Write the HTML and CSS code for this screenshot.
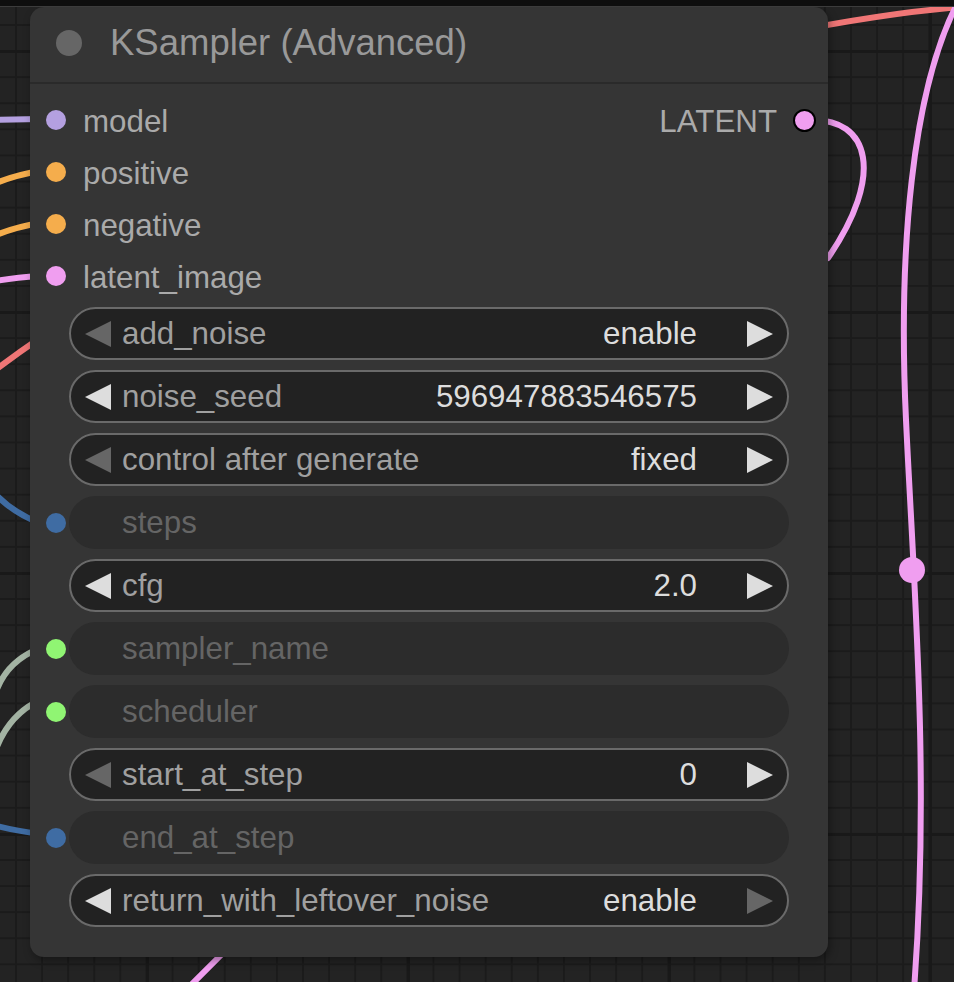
FILE: index.html
```html
<!DOCTYPE html>
<html lang="en">
<head>
  <meta charset="UTF-8" />
  <meta name="viewport" content="width=device-width, initial-scale=1.0"/>
  <title>KSampler (Advanced)</title>
  <link rel="stylesheet" href="styles.css">
</head>
<body>
<div class="canvas">
  <div class="topbar"></div>

  <!-- wires on the graph canvas -->
  <svg class="wires" width="954" height="982" viewBox="0 0 954 982">
    <g fill="none" stroke-width="6" stroke-linecap="round">
      <path d="M -10 120 L 40 119" stroke="#b4a0e0"/>
      <path d="M -10 186 Q 10 176 40 171" stroke="#f5ad4c"/>
      <path d="M -10 238 Q 10 228 40 223" stroke="#f5ad4c"/>
      <path d="M -10 282 Q 10 278 40 276" stroke="#f09ef0"/>
      <path d="M -10 374 Q 15 355 40 338" stroke="#f07676"/>
      <path d="M -10 488 Q 10 512 40 523" stroke="#3f6ca3"/>
      <path d="M -5 695 Q 5 662 40 648" stroke="#a3b3a3"/>
      <path d="M -5 752 Q 8 715 40 700" stroke="#a3b3a3"/>
      <path d="M -10 824 Q 10 830 40 834" stroke="#3f6ca3"/>
      <path d="M 186 990 L 226 950" stroke="#f09ef0"/>
      <path d="M 780 34 C 850 20, 900 12, 960 7" stroke="#f07676"/>
      <path d="M 810 120 C 870 118, 885 175, 828 258" stroke="#f09ef0"/>
      <path d="M 958 2 C 912 90, 898 250, 906 420 S 930 780, 914 990" stroke="#f09ef0"/>
    </g>
    <circle cx="912" cy="570" r="13" fill="#f09ef0"/>
  </svg>

  <div class="node">
    <div class="node-title">
      <span class="title-dot"></span>
      <span class="title-text">KSampler (Advanced)</span>
    </div>

    <div class="slots">
      <div class="slot-row">
        <span class="dot c-model"></span>
        <span class="slot-label">model</span>
        <span class="output">
          <span class="slot-label">LATENT</span>
          <span class="out-dot"></span>
        </span>
      </div>
      <div class="slot-row">
        <span class="dot c-cond"></span>
        <span class="slot-label">positive</span>
      </div>
      <div class="slot-row">
        <span class="dot c-cond"></span>
        <span class="slot-label">negative</span>
      </div>
      <div class="slot-row">
        <span class="dot c-latent"></span>
        <span class="slot-label">latent_image</span>
      </div>
    </div>

    <div class="widgets">
      <div class="widget-row">
        <span class="wslot"></span>
        <div class="pill">
          <svg class="arrow dim" viewBox="0 0 26 26"><polygon points="26,0 26,26 0,13"/></svg>
          <span class="wlabel">add_noise</span>
          <span class="wvalue">enable</span>
          <svg class="arrow" viewBox="0 0 26 26"><polygon points="0,0 0,26 26,13"/></svg>
        </div>
      </div>
      <div class="widget-row">
        <span class="wslot"></span>
        <div class="pill">
          <svg class="arrow" viewBox="0 0 26 26"><polygon points="26,0 26,26 0,13"/></svg>
          <span class="wlabel">noise_seed</span>
          <span class="wvalue">596947883546575</span>
          <svg class="arrow" viewBox="0 0 26 26"><polygon points="0,0 0,26 26,13"/></svg>
        </div>
      </div>
      <div class="widget-row">
        <span class="wslot"></span>
        <div class="pill">
          <svg class="arrow dim" viewBox="0 0 26 26"><polygon points="26,0 26,26 0,13"/></svg>
          <span class="wlabel">control after generate</span>
          <span class="wvalue">fixed</span>
          <svg class="arrow" viewBox="0 0 26 26"><polygon points="0,0 0,26 26,13"/></svg>
        </div>
      </div>
      <div class="widget-row">
        <span class="wslot c-int"></span>
        <div class="pill off"><span class="wlabel">steps</span></div>
      </div>
      <div class="widget-row">
        <span class="wslot"></span>
        <div class="pill">
          <svg class="arrow" viewBox="0 0 26 26"><polygon points="26,0 26,26 0,13"/></svg>
          <span class="wlabel">cfg</span>
          <span class="wvalue">2.0</span>
          <svg class="arrow" viewBox="0 0 26 26"><polygon points="0,0 0,26 26,13"/></svg>
        </div>
      </div>
      <div class="widget-row">
        <span class="wslot c-combo"></span>
        <div class="pill off"><span class="wlabel">sampler_name</span></div>
      </div>
      <div class="widget-row">
        <span class="wslot c-combo"></span>
        <div class="pill off"><span class="wlabel">scheduler</span></div>
      </div>
      <div class="widget-row">
        <span class="wslot"></span>
        <div class="pill">
          <svg class="arrow dim" viewBox="0 0 26 26"><polygon points="26,0 26,26 0,13"/></svg>
          <span class="wlabel">start_at_step</span>
          <span class="wvalue">0</span>
          <svg class="arrow" viewBox="0 0 26 26"><polygon points="0,0 0,26 26,13"/></svg>
        </div>
      </div>
      <div class="widget-row">
        <span class="wslot c-int"></span>
        <div class="pill off"><span class="wlabel">end_at_step</span></div>
      </div>
      <div class="widget-row">
        <span class="wslot"></span>
        <div class="pill">
          <svg class="arrow" viewBox="0 0 26 26"><polygon points="26,0 26,26 0,13"/></svg>
          <span class="wlabel">return_with_leftover_noise</span>
          <span class="wvalue">enable</span>
          <svg class="arrow dim" viewBox="0 0 26 26"><polygon points="0,0 0,26 26,13"/></svg>
        </div>
      </div>
    </div>
  </div>
</div>
</body>
</html>
```

FILE: styles.css
```css
body {
  margin: 0;
  background: #222;
  font-family: "Liberation Sans", Arial, sans-serif;
  overflow: hidden;
}
/* graph canvas with grid */
.canvas {
  position: relative;
  width: 954px;
  height: 982px;
  overflow: hidden;
  background-color: #232323;
  background-image:
    linear-gradient(90deg, #191919 3px, transparent 3px),
    linear-gradient(#191919 3px, transparent 3px),
    linear-gradient(90deg, #1b1b1b 2px, transparent 2px),
    linear-gradient(#1b1b1b 2px, transparent 2px);
  background-size: 261px 261px, 261px 261px, 26.1px 26.1px, 26.1px 26.1px;
  background-position: 146px 0, 0 311px, 15px 0, 0 24px;
}
.topbar {
  position: relative;
  z-index: 2;
  height: 6px;
  background: #0e0e0e;
  border-bottom: 1px solid #3c3c3c;
}
.wires {
  position: absolute;
  top: 0;
  left: 0;
}
/* node window */
.node {
  position: absolute;
  top: 7px;
  left: 30px;
  width: 798px;
  height: 950px;
  background: #353535;
  border-radius: 14px;
  box-shadow: 2px 4px 8px rgba(0,0,0,0.35);
}
.node-title {
  display: flex;
  align-items: center;
  height: 71px;
  padding: 0 0 4px 26px;
  border-bottom: 2px solid #2a2a2a;
}
.title-dot {
  width: 26px;
  height: 26px;
  border-radius: 50%;
  background: #666;
}
.title-text {
  margin-left: 28px;
  font-size: 36.5px;
  color: #999;
}
/* inputs / outputs */
.slots {
  padding-top: 12px;
}
.slot-row {
  display: flex;
  align-items: center;
  height: 52px;
  padding: 0 12px 0 16px;
}
.dot {
  width: 20px;
  height: 20px;
  margin-bottom: 4px;
  border-radius: 50%;
}
.slot-label {
  margin-left: 17px;
  font-size: 31.3px;
  color: #aaa;
}
.output {
  display: flex;
  align-items: center;
  margin-left: auto;
}
.output .slot-label {
  margin-left: 0;
}
.out-dot {
  box-sizing: border-box;
  width: 23px;
  height: 23px;
  margin: 0 0 4px 16px;
  border-radius: 50%;
  border: 2px solid #000;
  background: #f09ef0;
}
.c-model { background: #b4a0e0; }
.c-cond { background: #f5ad4c; }
.c-latent { background: #f09ef0; }
.c-int { background: #3f6ca3; }
.c-combo { background: #90f573; }
/* widgets */
.widgets {
  display: flex;
  flex-direction: column;
  gap: 10px;
  margin-top: 3px;
  padding: 0 39px 0 16px;
}
.widget-row {
  display: flex;
  align-items: center;
}
.wslot {
  width: 20px;
  height: 20px;
  margin-right: 3px;
  border-radius: 50%;
}
.pill {
  box-sizing: border-box;
  flex: 1;
  display: flex;
  align-items: center;
  height: 53px;
  padding: 0 14px;
  background: #222;
  border: 2px solid #6a6a6a;
  border-radius: 27px;
  font-size: 31.3px;
  line-height: 49px;
  white-space: nowrap;
}
.pill.off {
  background: #2c2c2c;
  border-color: transparent;
  padding-left: 51px;
}
.pill.off .wlabel {
  margin-left: 0;
  color: #656565;
}
.arrow {
  width: 26px;
  height: 26px;
  flex: none;
  fill: #ddd;
}
.arrow.dim {
  fill: #666;
}
.wlabel {
  margin-left: 11px;
  color: #a0a0a0;
}
.wvalue {
  margin-left: auto;
  margin-right: 50px;
  color: #ddd;
}
```
